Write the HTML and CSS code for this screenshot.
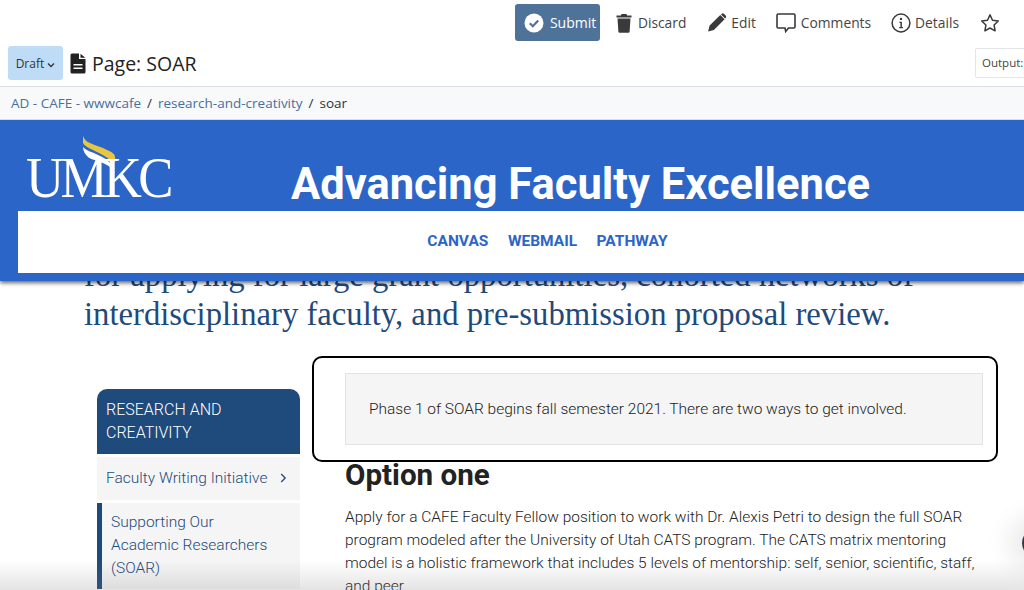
FILE: index.html
```html
<!DOCTYPE html>
<html>
<head>
    <title>Page: SOAR</title>
    <link rel="stylesheet" href="styles.css">
</head>
<body>
    <div class="toolbar">
        <div class="actions">
            <button class="submit">
                <svg width="20" height="20" viewBox="0 0 20 20"><circle cx="10" cy="10" r="9.5" fill="#fff"/><path d="M5.8 10.2l3 3 5.4-5.6" fill="none" stroke="#4f7299" stroke-width="2.2"/></svg>
                Submit
            </button>
            <a class="action discard">
                <svg width="16" height="20" viewBox="0 0 16 20"><path d="M5.5 1h5l.6 1.5H15.500v2H.5v-2h4.400zM1.500 5.500h13l-.9 13.200a1.200 1.200 0 0 1-1.200 1.100H3.600a1.200 1.200 0 0 1-1.200-1.100z" fill="#3a3a3a"/></svg>
                Discard
            </a>
            <a class="action edit">
                <svg width="20" height="19" viewBox="0 0 19 19"><path d="M12.800 1.900l4.300 4.300-10.700 10.700-5.800 1.500 1.500-5.800zM14 .9c.8-.8 1.900-.8 2.600 0l1.500 1.500c.8.700.8 1.800 0 2.600l-.5.500-4.100-4.100z" fill="#3a3a3a"/></svg>
                Edit
            </a>
            <a class="action comments">
                <svg width="20" height="20" viewBox="0 0 20 20"><path d="M2.200 1h15.600c.7 0 1.200.5 1.200 1.200v11.600c0 .7-.5 1.200-1.200 1.200h-5.300l-2.800 3.500-.7-3.500H2.200c-.7 0-1.200-.5-1.200-1.200V2.200C1 1.500 1.500 1 2.200 1z" fill="none" stroke="#3a3a3a" stroke-width="1.600"/></svg>
                Comments
            </a>
            <a class="action details">
                <svg width="20" height="20" viewBox="0 0 20 20"><circle cx="10" cy="10" r="8.900" fill="none" stroke="#3a3a3a" stroke-width="1.500"/><circle cx="10" cy="5.900" r="1.200" fill="#3a3a3a"/><path d="M8.400 8.700h2.500v5.300h1.100v1.200H8.200V14h1.200V9.900h-1z" fill="#3a3a3a"/></svg>
                Details
            </a>
            <a class="action star">
                <svg width="20" height="20" viewBox="0 0 20 20"><path d="M10 1.900l2.500 5.300 5.800.8-4.200 4 1 5.800-5.100-2.800-5.100 2.800 1-5.800-4.200-4 5.800-.8z" fill="none" stroke="#3a3a3a" stroke-width="1.500" stroke-linejoin="round"/></svg>
            </a>
        </div>
        <div class="title-row">
            <div class="page-title">
                <button class="draft">Draft <svg width="8" height="6" viewBox="0 0 8 6"><path d="M1 1.500l3 3 3-3" fill="none" stroke="#333" stroke-width="1.300"/></svg></button>
                <svg class="file-icon" width="16" height="21" viewBox="0 0 16 21"><path d="M2 .5h7v5.500h6.500v13a1.500 1.500 0 0 1-1.500 1.500H2A1.500 1.500 0 0 1 .5 19V2A1.500 1.500 0 0 1 2 .5zM10.500.8l4.800 4H10.500zM3.500 11v1.500h9V11zM3.500 14.500V16h9v-1.500z" fill="#222" fill-rule="evenodd"/></svg>
                <h1>Page: SOAR</h1>
            </div>
            <div class="output">Output:</div>
        </div>
    </div>

    <div class="breadcrumb">
        <a>AD - CAFE - wwwcafe</a><span class="sep">/</span><a>research-and-creativity</a><span class="sep">/</span><span>soar</span>
    </div>

    <div class="preview">
        <div class="site-header">
            <div class="brand">
                <div class="logo">
                    <svg class="flame" width="34" height="33" viewBox="0 0 34 33"><path d="M0 0C2 4 4 6 7 7 13 10 19 11 24 14 29 16 32 18 32 21 32.500 23 32 25 31 27 29 25 28 24.500 27 24 22 20 18 18 14 16 9 13 2 11 0 7z" fill="#e9c53f"/><path d="M0 11C3 15 10 16 15 19 20 21 25 24 28 28L27 31C24 29 21 27 17 26 12 24 7 23 5 21 2 18 0 15 0 11z" fill="#fff"/></svg>
                    <span class="logo-text">UMKC</span>
                </div>
                <div class="site-title">Advancing Faculty Excellence</div>
            </div>
            <div class="site-nav">
                <a>CANVAS</a>
                <a>WEBMAIL</a>
                <a>PATHWAY</a>
            </div>
        </div>

        <div class="content">
            <p class="lead">for applying for large grant opportunities, cohorted networks of<br>interdisciplinary faculty, and pre-submission proposal review.</p>
            <div class="columns">
                <nav class="sidebar">
                    <div class="side-head">RESEARCH AND CREATIVITY</div>
                    <a class="side-item">Faculty Writing Initiative <svg class="chev" width="7" height="10" viewBox="0 0 7 10"><path d="M1.200 1l4 4-4 4" fill="none" stroke="#1f4a7c" stroke-width="1.300"/></svg></a>
                    <a class="side-item current">Supporting Our Academic Researchers (SOAR)</a>
                </nav>
                <main class="article">
                    <div class="well">Phase 1 of SOAR begins fall semester 2021. There are two ways to get involved.</div>
                    <h2>Option one</h2>
                    <p>Apply for a CAFE Faculty Fellow position to work with Dr. Alexis Petri to design the full SOAR program modeled after the University of Utah CATS program. The CATS matrix mentoring model is a holistic framework that includes 5 levels of mentorship: self, senior, scientific, staff, and peer.</p>
                </main>
            </div>
        </div>

        <div class="callout"></div>
        <div class="chat-bubble"></div>
    </div>
    <div class="bottom-fade"></div>
</body>
</html>
```

FILE: styles.css
```css
html, body {
    height: 590px;
    overflow: hidden;
}
body {
    margin: 0;
    font-family: "Open Sans", sans-serif;
    color: #333;
    background: #fff;
}
a { text-decoration: none; }

/* cms toolbar */
.toolbar {
    height: 86px;
    overflow: hidden;
    border-bottom: 1px solid #d9dee5;
}
.actions {
    display: flex;
    justify-content: flex-end;
    align-items: center;
    height: 37px;
    padding: 4px 24px 0 0;
    gap: 21px;
}
.action {
    display: flex;
    align-items: center;
    gap: 5px;
    font-size: 13.800px;
    color: #444;
}
.discard { gap: 6px; }
.edit { gap: 4px; margin-right: -1px; }
.comments { margin-right: -1px; }
.details { gap: 4px; }
.submit {
    display: flex;
    align-items: center;
    gap: 6px;
    height: 37px;
    width: 85px;
    padding: 0 0 0 9px;
    border: none;
    border-radius: 3px;
    background: #4f7299;
    color: #fff;
    font: 14px "Open Sans", sans-serif;
    margin-right: -5px;
}
.title-row {
    display: flex;
    justify-content: space-between;
    align-items: center;
    margin-top: 5px;
    width: 1108px;
}
.page-title {
    display: flex;
    align-items: center;
    padding-left: 8px;
}
.draft {
    width: 55px;
    height: 34px;
    border: none;
    border-radius: 3px;
    background: #bfdcf7;
    color: #333;
    font: 12px "Open Sans", sans-serif;
    padding: 0;
}
.file-icon { margin: 0 6px 0 7px; }
h1 {
    margin: 0;
    font-size: 19.500px;
    font-weight: 400;
    color: #222;
}
.output {
    width: 125px;
    height: 28px;
    line-height: 28px;
    padding-left: 6px;
    border: 1px solid #e2e5e9;
    border-radius: 2px;
    font-size: 11.500px;
    color: #444;
}

.breadcrumb {
    height: 32px;
    line-height: 33px;
    padding-left: 11px;
    border-bottom: 1px solid #d9dee5;
    background: #f7f9fb;
    font-size: 13.500px;
    color: #333;
}
.breadcrumb a { color: #4a6f9a; }
.sep { margin: 0 6px; }

/* previewed page */
.preview {
    position: relative;
    height: 470px;
    overflow: hidden;
    font-family: Roboto, sans-serif;
}
.site-header {
    position: absolute;
    top: 0;
    left: 0;
    right: 0;
    height: 161px;
    background: #2b65c7;
    box-shadow: 0 2px 4px rgba(0, 0, 0, 0.6);
    z-index: 2;
}
.brand {
    display: flex;
    height: 91px;
    color: #fff;
}
.logo {
    position: relative;
    width: 291px;
    padding: 31px 0 0 26px;
    box-sizing: border-box;
}
.flame {
    position: absolute;
    left: 83px;
    top: 16px;
}
.logo-text {
    display: inline-block;
    font: 58px/54px "Liberation Serif", serif;
    letter-spacing: -4px;
    transform: scaleX(0.91);
    transform-origin: left;
}
.site-title {
    font-size: 43.500px;
    font-weight: 700;
    line-height: 46px;
    padding-top: 42px;
    white-space: nowrap;
}
.site-nav {
    display: flex;
    justify-content: center;
    align-items: center;
    gap: 19.500px;
    height: 60px;
    margin-left: 18px;
    padding: 0 0 2px 53px;
    background: #fff;
    font-size: 15.500px;
    font-weight: 700;
}
.site-nav a { color: #2b65c7; }

.content { padding-top: 136px; }
.lead {
    margin: 0 0 0 84px;
    font: 32.700px/39px "Liberation Serif", serif;
    color: #1f4a7c;
    white-space: nowrap;
}
.columns {
    display: flex;
    margin: 55px 0 0 97px;
}
.sidebar {
    width: 203px;
    flex-shrink: 0;
    font-size: 15.500px;
    font-weight: 300;
    line-height: 23.250px;
}
.side-head {
    padding: 9px 30px 9.500px 9px;
    border-radius: 10px 10px 0 0;
    background: #1f4a7c;
    color: #fff;
    font-size: 16px;
    line-height: 23px;
}
.side-item {
    display: block;
    margin-top: 3px;
    padding: 10px 9px;
    background: #f5f5f5;
    color: #1f4a7c;
}
.chev { margin-left: 9px; }
.current {
    padding: 8px 25px 8px 9px;
    border-left: 5px solid #1f4a7c;
}
.article {
    width: 638px;
    margin: -16px 0 0 45px;
    color: #222;
}
.well {
    height: 70px;
    line-height: 70px;
    padding-left: 23px;
    border: 1px solid #e3e3e3;
    background: #f5f5f5;
    font-size: 15.480px;
    font-weight: 300;
}
h2 {
    margin: 13px 0 0;
    font-size: 29.600px;
    font-weight: 700;
    line-height: 34px;
}
.article p {
    margin: 14px 0 0;
    font-size: 15.480px;
    font-weight: 300;
    line-height: 23px;
}
.callout {
    position: absolute;
    left: 312px;
    top: 236px;
    width: 682px;
    height: 102px;
    border: 2px solid #000;
    border-radius: 10px;
}
.chat-bubble {
    position: absolute;
    left: 1022px;
    top: 408px;
    width: 30px;
    height: 30px;
    border-radius: 50%;
    background: #33394a;
    box-shadow: 0 0 24px 14px rgba(0, 0, 0, 0.08);
}
.bottom-fade {
    position: absolute;
    left: 0;
    right: 0;
    top: 560px;
    height: 30px;
    background: linear-gradient(rgba(120, 120, 120, 0), rgba(120, 120, 120, 0.2));
}
```
